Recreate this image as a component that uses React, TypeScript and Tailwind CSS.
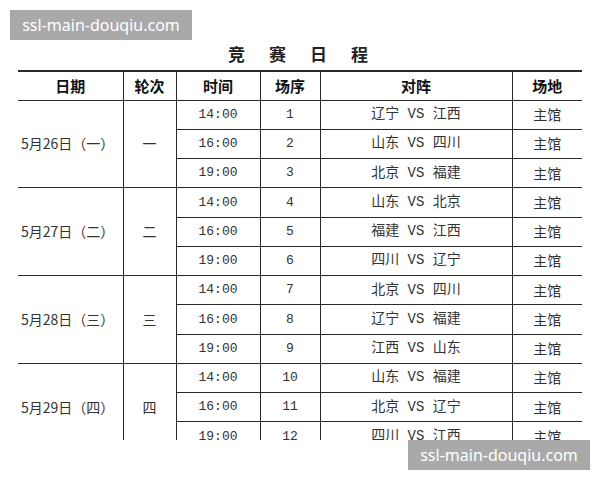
import React from "react";

const groups = [
  { date: "5月26日（一）", round: "一", rows: [["14:00", "1", "辽宁", "江西"], ["16:00", "2", "山东", "四川"], ["19:00", "3", "北京", "福建"]] },
  { date: "5月27日（二）", round: "二", rows: [["14:00", "4", "山东", "北京"], ["16:00", "5", "福建", "江西"], ["19:00", "6", "四川", "辽宁"]] },
  { date: "5月28日（三）", round: "三", rows: [["14:00", "7", "北京", "四川"], ["16:00", "8", "辽宁", "福建"], ["19:00", "9", "江西", "山东"]] },
  { date: "5月29日（四）", round: "四", rows: [["14:00", "10", "山东", "福建"], ["16:00", "11", "北京", "辽宁"], ["19:00", "12", "四川", "江西"]] },
];

const cjk = { fontFamily: '"Noto Sans CJK SC", sans-serif' };
const mono = { fontFamily: '"Liberation Mono", "Noto Sans CJK SC", monospace' };

export default function App() {
  return (
    <div className="relative w-[600px] h-[480px] bg-white overflow-hidden">
      <div className="h-[440px] overflow-hidden">
        <div
          className="h-[70px] pt-[44px] text-center text-[17px] leading-[20px] font-bold text-[#222] tracking-[24px] pl-[20px]"
          style={{ fontFamily: '"Noto Sans CJK SC", serif' }}
        >
          竞赛日程
        </div>
        <table className="ml-[18px] w-[564px] table-fixed border-collapse text-[#333]">
          <colgroup>
            <col className="w-[105px]" />
            <col className="w-[53px]" />
            <col className="w-[84px]" />
            <col className="w-[60px]" />
            <col className="w-[192px]" />
            <col className="w-[70px]" />
          </colgroup>
          <thead>
            <tr className="h-[29px] text-[15px] font-bold text-[#111]" style={cjk}>
              <th className="border-t-2 border-b border-r border-[#2a2a2a] font-bold">日期</th>
              <th className="border-t-2 border-b border-x border-[#2a2a2a] font-bold">轮次</th>
              <th className="border-t-2 border-b border-x border-[#2a2a2a] font-bold">时间</th>
              <th className="border-t-2 border-b border-x border-[#2a2a2a] font-bold">场序</th>
              <th className="border-t-2 border-b border-x border-[#2a2a2a] font-bold">对阵</th>
              <th className="border-t-2 border-b border-l border-[#2a2a2a] font-bold">场地</th>
            </tr>
          </thead>
          <tbody>
            {groups.map((g) =>
              g.rows.map((r, i) => (
                <tr key={g.date + i} className="h-[29.25px]">
                  {i === 0 && (
                    <td
                      rowSpan={3}
                      className="border-y border-r border-[#2a2a2a] pl-[3px] text-[14px] text-[#333] align-middle"
                      style={cjk}
                    >
                      {g.date}
                    </td>
                  )}
                  {i === 0 && (
                    <td rowSpan={3} className="border border-[#2a2a2a] text-center text-[14px] text-[#333]" style={cjk}>
                      {g.round}
                    </td>
                  )}
                  <td className="border border-[#2a2a2a] text-center text-[13px] text-[#333]" style={mono}>
                    {r[0]}
                  </td>
                  <td className="border border-[#2a2a2a] text-center text-[13px] text-[#333]" style={mono}>
                    {r[1]}
                  </td>
                  <td className="border border-[#2a2a2a] text-center text-[14px] text-[#333] whitespace-pre" style={mono}>
                    {`${r[2]} VS ${r[3]}`}
                  </td>
                  <td className="border-y border-l border-[#2a2a2a] text-center text-[14px] text-[#333]" style={cjk}>
                    主馆
                  </td>
                </tr>
              ))
            )}
          </tbody>
        </table>
      </div>
      <div
        className="absolute left-[10px] top-[10px] w-[182px] h-[30px] bg-[#a9a9a9] text-white text-[16px] leading-[30px] text-center"
        style={{ fontFamily: '"Noto Sans", sans-serif' }}
      >
        ssl-main-douqiu.com
      </div>
      <div
        className="absolute left-[408px] top-[440px] w-[182px] h-[30px] bg-[#a9a9a9] text-white text-[16px] leading-[30px] text-center"
        style={{ fontFamily: '"Noto Sans", sans-serif' }}
      >
        ssl-main-douqiu.com
      </div>
    </div>
  );
}
